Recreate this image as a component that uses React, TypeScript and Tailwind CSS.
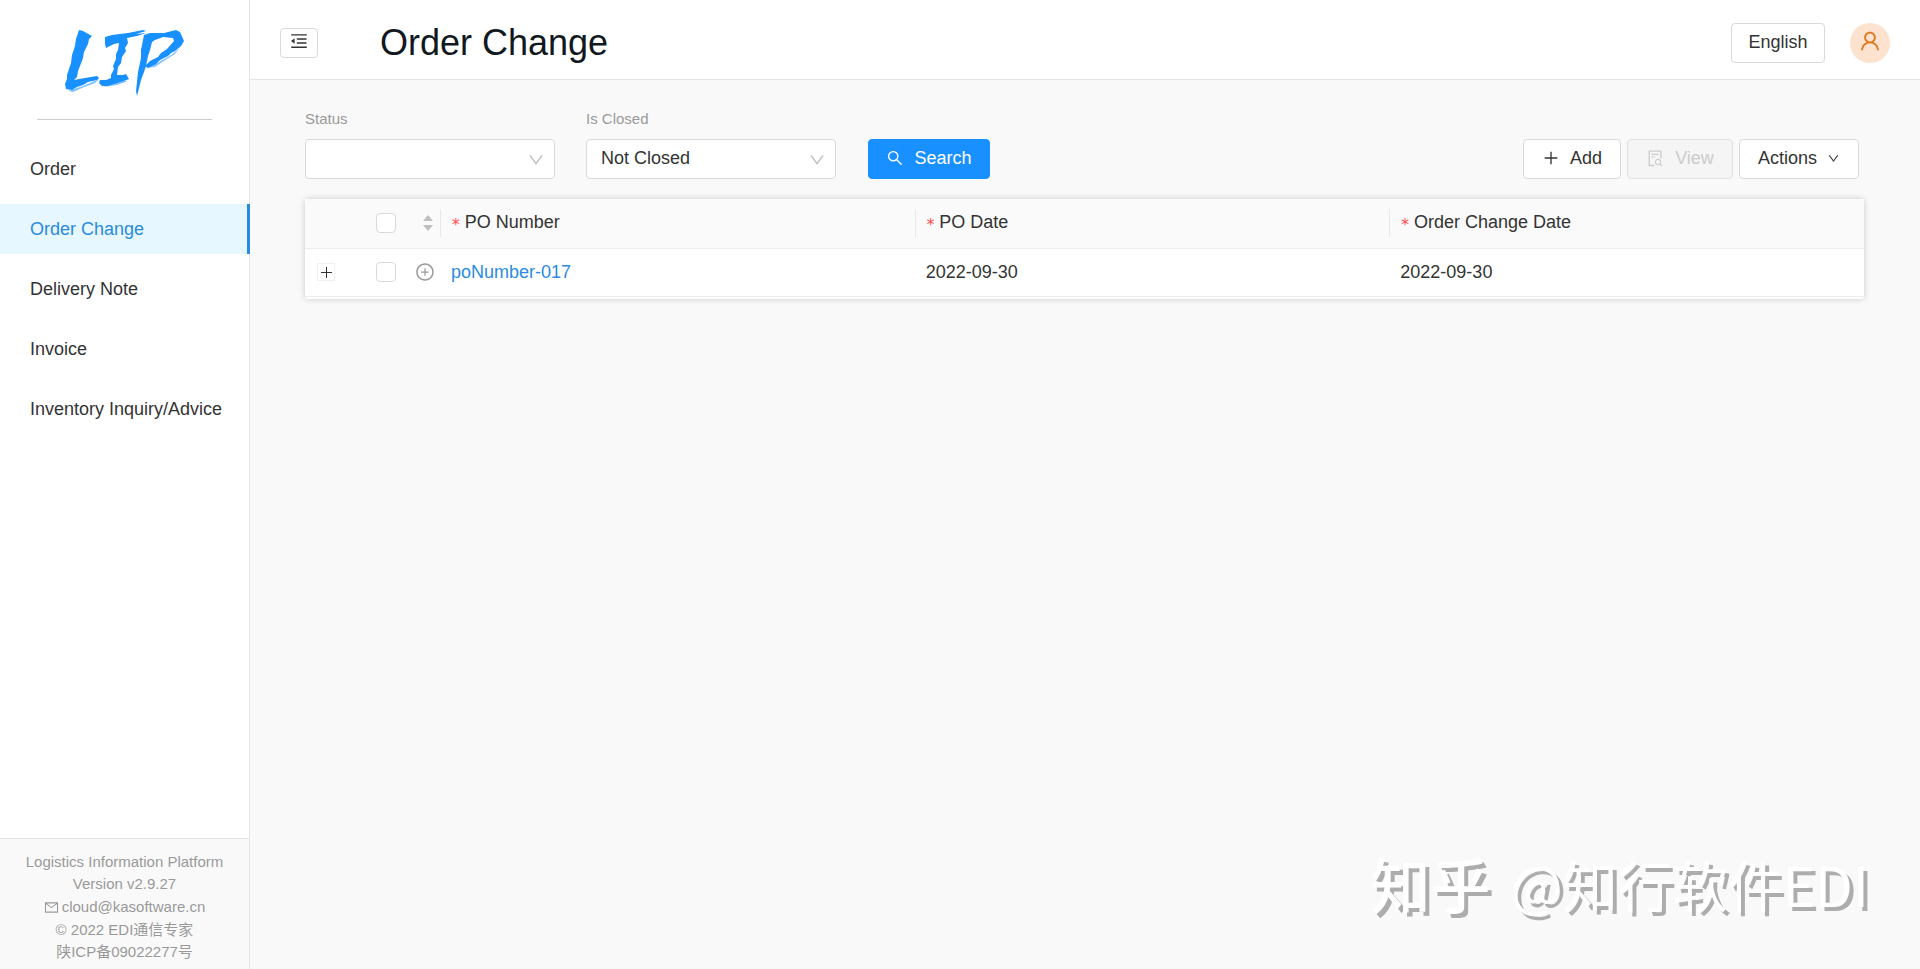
import React from 'react';
import {
  AiOutlineUser,
  AiOutlineSearch,
  AiOutlinePlus,
  AiOutlineDown,
  AiOutlineMail,
  AiOutlineFileSearch,
  AiOutlinePlusCircle,
  AiOutlineMenuFold,
} from 'react-icons/ai';

const menu = ['Order', 'Order Change', 'Delivery Note', 'Invoice', 'Inventory Inquiry/Advice'];

function Logo() {
  return (
    <svg viewBox="66 30 120 66" className="h-[66px] w-[120px]" role="img" aria-label="LIP" fill="#1890ff">
      <path d="M80 30 L84 31 L93 36 L90 39 L89 44 L85 52 L84 58 L81 66 L79 71 L78 77 L75 80 L86 78 L92 77 L98 76 L100 78 L98 80 L89 82 L84 85 L78 87 L73 90 L67 89 L66 84 L68 79 L68 75 L72 63 L73 55 L76 46 L77 39 Z" />
      <path d="M84 86 L100 79 L96 83 L83 88 L74 92 L69 91 Z" opacity=".55" />
      <path d="M106 37 L113 35 L129 33 L144 30 L147 31 L137 34 L147 33 L138 36 L128 38 L129 43 L126 48 L127 51 L123 57 L122 63 L119 67 L118 75 L124 75 L127 74 L130 79 L125 81 L121 82 L109 86 L103 86 L100 83 L101 80 L107 80 L112 78 L112 75 L115 69 L114 66 L117 59 L117 54 L119 50 L120 43 L115 44 L107 48 L106 44 Z" />
      <path d="M104 87 L122 81 L129 81 L118 85 L111 86 Z" opacity=".55" />
      <path d="M145 35 L151 33 L165 33 L177 30 L181 32 L185 41 L182 46 L176 51 L172 53 L169 56 L161 60 L157 64 L149 68 L146 66 L151 61 L159 57 L162 53 L168 49 L175 41 L174 38 L164 37 L156 40 L153 42 L151 50 L149 56 L147 66 L145 72 L142 80 L140 88 L138 96 L137 91 L138 82 L139 72 L142 58 L142 50 Z" />
      <path d="M148 68 L160 62 L172 55 L181 48 L176 54 L165 61 L156 67 Z" opacity=".5" />
    </svg>
  );
}

function Required() {
  return (
    <span className="mr-1 pt-1.5 font-['DejaVu_Sans_Mono',monospace] text-base leading-none text-[#ff4d4f]" aria-hidden="true">
      *
    </span>
  );
}

function Select({ id, label, options }: { id: string; label: string; options: string[] }) {
  return (
    <div className="flex w-[250px] flex-col gap-1.5">
      <label htmlFor={id} className="text-[15px] leading-7 text-[#999]">{label}</label>
      <div className="relative">
        <select id={id} className="h-10 w-full appearance-none rounded-[4px] border border-[#d9d9d9] bg-white pr-10 pb-0.5 pl-3.5 text-lg text-[#333]">
          {options.map((o) => <option key={o}>{o}</option>)}
        </select>
        <AiOutlineDown className="pointer-events-none absolute top-3 right-2.5 size-[18px] text-[#bfbfbf]" />
      </div>
    </div>
  );
}

const button = 'flex h-10 items-center justify-center rounded-[4px] border pb-0.5 text-lg';
const box = 'block size-5 appearance-none rounded-[4px] border border-[#d9d9d9] bg-white';

export default function App() {
  return (
    <div className="flex min-h-screen bg-[#f9f9f9] font-['Liberation_Sans','Noto_Sans_CJK_SC',sans-serif] text-lg text-[#333]">
      <aside className="flex w-[250px] shrink-0 flex-col border-r border-[#e4e4e4] bg-white">
        <div className="mx-[37px] flex h-[120px] items-start justify-center border-b border-[#ccc] pt-[30px]">
          <Logo />
        </div>
        <nav className="mt-6 flex flex-col gap-2.5">
          {menu.map((m) => (
            <a
              key={m}
              href="#"
              className={
                m === 'Order Change'
                  ? '-mr-px flex h-[50px] items-center border-r-[3px] border-[#2b8be0] bg-[#e6f7ff] pl-[30px] text-[#2b8be0]'
                  : 'flex h-[50px] items-center pl-[30px]'
              }
            >
              {m}
            </a>
          ))}
        </nav>
        <footer className="mt-auto border-t border-[#e4e4e4] bg-[#f9f9f9] pt-3 pb-1.5 text-center text-[15px] leading-[22px] text-[#999]">
          <p>Logistics Information Platform</p>
          <p>Version v2.9.27</p>
          <p className="flex items-center justify-center gap-[3px] leading-6">
            <AiOutlineMail className="size-[15px]" />
            <a href="mailto:cloud@kasoftware.cn">cloud@kasoftware.cn</a>
          </p>
          <p>© 2022 EDI通信专家</p>
          <p>陕ICP备09022277号</p>
        </footer>
      </aside>

      <div className="relative flex min-w-0 flex-1 flex-col">
        <header className="flex h-20 items-center border-b border-[#e4e4e4] bg-white px-[30px]">
          <button aria-label="Collapse menu" className="mt-1.5 flex h-[30px] w-[38px] items-center justify-center rounded-[4px] border border-[#d9d9d9] pb-1">
            <AiOutlineMenuFold className="size-5" />
          </button>
          <h1 className="ml-[62px] pt-1.5 text-[36px] leading-[50px] text-[#101820]">Order Change</h1>
          <button className={`${button} mt-1.5 ml-auto w-[94px] border-[#d9d9d9] bg-white`}>English</button>
          <button aria-label="Account" className="mt-1.5 ml-[25px] flex size-10 items-center justify-center rounded-full bg-[#fde3cf] pb-1 text-[#e0761c]">
            <AiOutlineUser className="size-6" />
          </button>
        </header>

        <main className="pt-[25px] pr-14 pl-[55px]">
          <div className="flex items-end pr-[5px]">
            <Select id="status" label="Status" options={['', 'New', 'Confirmed']} />
            <div className="ml-[31px]"><Select id="closed" label="Is Closed" options={['Not Closed', 'Closed']} /></div>
            <button className={`${button} ml-8 w-[122px] gap-2.5 border-[#1890ff] bg-[#1890ff] text-white`}>
              <AiOutlineSearch className="size-[18px]" />
              Search
            </button>
            <div className="ml-auto flex gap-1.5">
              <button className={`${button} w-[98px] gap-2.5 border-[#d9d9d9] bg-white`}>
                <AiOutlinePlus className="size-[18px]" />
                Add
              </button>
              <button disabled className={`${button} w-[106px] gap-2.5 border-[#e0e0e0] bg-[#f5f5f5] text-[#ccc]`}>
                <AiOutlineFileSearch className="size-[19px]" />
                View
              </button>
              <button className={`${button} w-[120px] gap-2.5 border-[#d9d9d9] bg-white`}>
                Actions
                <AiOutlineDown className="size-[13px]" />
              </button>
            </div>
          </div>

          <div className="mt-5 rounded-[3px] bg-white pb-0.5 shadow-[0_0_6px_rgba(0,0,0,0.2)]">
            <table className="w-full table-fixed text-left">
              <colgroup>
                <col className="w-[55px]" />
                <col className="w-[50px]" />
                <col className="w-[30px]" />
                <col />
                <col />
                <col />
              </colgroup>
              <thead>
                <tr className="h-[49px] border-b border-[#ececec] bg-[#fafafa]">
                  <th />
                  <th className="pl-4"><input type="checkbox" aria-label="Select all rows" className={box} /></th>
                  <th>
                    <svg viewBox="0 0 10 16" className="ml-[13px] h-4 w-2.5" fill="#bfbfbf"><path d="M5 0l5 6H0zM0 10h10l-5 6z" /></svg>
                  </th>
                  {['PO Number', 'PO Date', 'Order Change Date'].map((h) => (
                    <th key={h} className="font-normal">
                      <div className="flex h-7 items-center border-l border-[#e8e8e8] pb-0.5 pl-2.5"><Required />{h}</div>
                    </th>
                  ))}
                </tr>
              </thead>
              <tbody>
                <tr className="h-12 border-b border-[#ececec]">
                  <td>
                    <button aria-label="Expand row" className="ml-3 flex size-[18px] items-center justify-center border border-[#f0f0f0]">
                      <svg viewBox="0 0 11 11" className="size-[11px]" stroke="#333"><path d="M5.5 0v11M0 5.5h11" /></svg>
                    </button>
                  </td>
                  <td className="pl-4"><input type="checkbox" aria-label="Select poNumber-017" className={box} /></td>
                  <td><button aria-label="Add line" className="ml-[5px] block text-[#999]"><AiOutlinePlusCircle className="size-5" /></button></td>
                  <td className="pl-[11px]"><a href="#" className="text-[#2b8be0]">poNumber-017</a></td>
                  <td className="pl-[11px]">2022-09-30</td>
                  <td className="pl-[11px]">2022-09-30</td>
                </tr>
              </tbody>
            </table>
          </div>
        </main>

        <p className="pointer-events-none absolute right-[51px] bottom-[46px] flex items-center gap-5 font-['Noto_Sans_CJK_SC',sans-serif] text-[55px] leading-[80px] whitespace-nowrap text-white [text-shadow:4px_4px_0_#adadad]">
          <span className="text-[60px] font-medium">知乎</span>
          <span>@知行软件EDI</span>
        </p>
      </div>
    </div>
  );
}
